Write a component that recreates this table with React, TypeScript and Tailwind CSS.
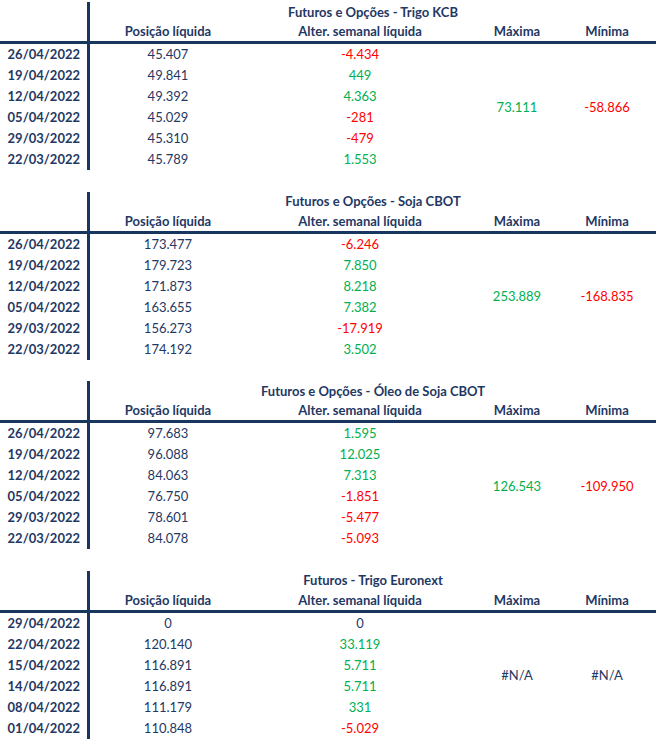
type Row = {
  date: string
  pos: string
  change: string
}

type Table = {
  title: string
  rows: Row[]
  max: string
  min: string
}

const tables: Table[] = [
  {
    title: "Futuros e Opções - Trigo KCB",
    rows: [
      { date: "26/04/2022", pos: "45.407", change: "-4.434" },
      { date: "19/04/2022", pos: "49.841", change: "449" },
      { date: "12/04/2022", pos: "49.392", change: "4.363" },
      { date: "05/04/2022", pos: "45.029", change: "-281" },
      { date: "29/03/2022", pos: "45.310", change: "-479" },
      { date: "22/03/2022", pos: "45.789", change: "1.553" },
    ],
    max: "73.111",
    min: "-58.866",
  },
  {
    title: "Futuros e Opções - Soja CBOT",
    rows: [
      { date: "26/04/2022", pos: "173.477", change: "-6.246" },
      { date: "19/04/2022", pos: "179.723", change: "7.850" },
      { date: "12/04/2022", pos: "171.873", change: "8.218" },
      { date: "05/04/2022", pos: "163.655", change: "7.382" },
      { date: "29/03/2022", pos: "156.273", change: "-17.919" },
      { date: "22/03/2022", pos: "174.192", change: "3.502" },
    ],
    max: "253.889",
    min: "-168.835",
  },
  {
    title: "Futuros e Opções - Óleo de Soja CBOT",
    rows: [
      { date: "26/04/2022", pos: "97.683", change: "1.595" },
      { date: "19/04/2022", pos: "96.088", change: "12.025" },
      { date: "12/04/2022", pos: "84.063", change: "7.313" },
      { date: "05/04/2022", pos: "76.750", change: "-1.851" },
      { date: "29/03/2022", pos: "78.601", change: "-5.477" },
      { date: "22/03/2022", pos: "84.078", change: "-5.093" },
    ],
    max: "126.543",
    min: "-109.950",
  },
  {
    title: "Futuros - Trigo Euronext",
    rows: [
      { date: "29/04/2022", pos: "0", change: "0" },
      { date: "22/04/2022", pos: "120.140", change: "33.119" },
      { date: "15/04/2022", pos: "116.891", change: "5.711" },
      { date: "14/04/2022", pos: "116.891", change: "5.711" },
      { date: "08/04/2022", pos: "111.179", change: "331" },
      { date: "01/04/2022", pos: "110.848", change: "-5.029" },
    ],
    max: "#N/A",
    min: "#N/A",
  },
]

// green for gains, red for losses, navy for zero / errors
function tone(value: string) {
  if (value.startsWith("-")) return "text-[#ff0000]"
  if (value === "0" || value.startsWith("#")) return "text-[#1f3864]"
  return "text-[#00b050]"
}

function CotTable({ table }: { table: Table }) {
  return (
    <section className="flex flex-col">
      {/* Header */}
      <div className="flex h-[39px]">
        <div className="w-[87px]" />
        <div className="w-[3px] bg-[#17375e]" />
        <div className="flex flex-1 flex-col font-bold">
          <div className="flex h-[20px] items-center justify-center">{table.title}</div>
          <div className="grid h-[19px] grid-cols-[156px_228px_86px_94px] items-center text-center">
            <span>Posição líquida</span>
            <span>Alter. semanal líquida</span>
            <span>Máxima</span>
            <span>Mínima</span>
          </div>
        </div>
      </div>

      <div className="h-[3px] bg-[#17375e]" />

      {/* Body */}
      <div className="flex">
        <div className="flex w-[87px] flex-col pr-[7px] text-right font-bold">
          {table.rows.map((row) => (
            <div key={row.date} className="flex h-[21px] items-center justify-end">
              {row.date}
            </div>
          ))}
        </div>
        <div className="w-[3px] bg-[#17375e]" />
        <div className="grid flex-1 grid-cols-[156px_228px_86px_94px] grid-rows-6 text-center">
          {table.rows.map((row, i) => (
            <div key={row.date + i} className="contents">
              <div className="flex h-[21px] items-center justify-center" style={{ gridRow: i + 1, gridColumn: 1 }}>
                {row.pos}
              </div>
              <div
                className={`flex h-[21px] items-center justify-center ${tone(row.change)}`}
                style={{ gridRow: i + 1, gridColumn: 2 }}
              >
                {row.change}
              </div>
            </div>
          ))}
          <div className={`col-start-3 row-span-6 row-start-1 flex items-center justify-center ${tone(table.max)}`}>
            {table.max}
          </div>
          <div className={`col-start-4 row-span-6 row-start-1 flex items-center justify-center ${tone(table.min)}`}>
            {table.min}
          </div>
        </div>
      </div>
    </section>
  )
}

export default function App() {
  return (
    <div className="flex h-[746px] w-[656px] flex-col gap-[21.67px] overflow-hidden bg-white pt-[2px] font-['Lato',sans-serif] text-[13px] leading-none text-[#1f3864]">
      {tables.map((t) => (
        <CotTable key={t.title} table={t} />
      ))}
    </div>
  )
}
